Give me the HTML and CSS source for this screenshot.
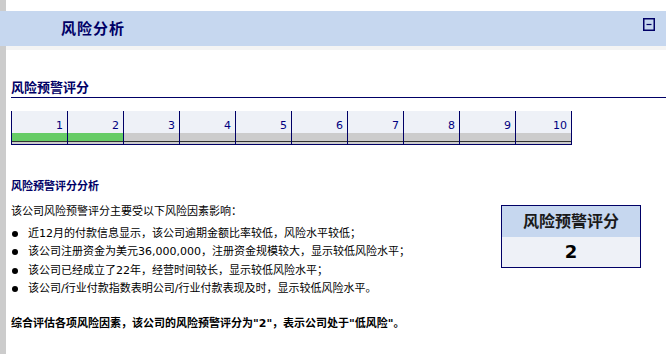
FILE: index.html
```html
<!DOCTYPE html>
<html lang="zh">
<head>
    <meta charset="UTF-8">
    <meta name="viewport" content="width=device-width, initial-scale=1.0">
    <title>风险分析</title>
    <link rel="stylesheet" href="styles.css">
</head>
<body>
<div class="page">
    <div class="header">
        <h1>风险分析</h1>
        <svg class="toggle" width="12" height="13" viewBox="0 0 12 13">
            <rect x="0.75" y="0.75" width="10.5" height="11.5" fill="none" stroke="#000066" stroke-width="1.5"/>
            <line x1="3.5" y1="6.5" x2="8.5" y2="6.5" stroke="#000066" stroke-width="1.2"/>
        </svg>
    </div>
    <div class="strip"></div>

    <div class="content">
        <h2 class="section-title">风险预警评分</h2>

        <div class="scale">
            <div class="cell on"><span class="num">1</span><div class="fill"></div><div class="base"></div></div>
            <div class="cell on"><span class="num">2</span><div class="fill"></div><div class="base"></div></div>
            <div class="cell"><span class="num">3</span><div class="fill"></div><div class="base"></div></div>
            <div class="cell"><span class="num">4</span><div class="fill"></div><div class="base"></div></div>
            <div class="cell"><span class="num">5</span><div class="fill"></div><div class="base"></div></div>
            <div class="cell"><span class="num">6</span><div class="fill"></div><div class="base"></div></div>
            <div class="cell"><span class="num">7</span><div class="fill"></div><div class="base"></div></div>
            <div class="cell"><span class="num">8</span><div class="fill"></div><div class="base"></div></div>
            <div class="cell"><span class="num">9</span><div class="fill"></div><div class="base"></div></div>
            <div class="cell"><span class="num">10</span><div class="fill"></div><div class="base"></div></div>
        </div>

        <h3 class="sub-title">风险预警评分分析</h3>

        <div class="analysis">
            <div class="factors">
                <p>该公司风险预警评分主要受以下风险因素影响：</p>
                <ul>
                    <li>近12月的付款信息显示，该公司逾期金额比率较低，风险水平较低；</li>
                    <li>该公司注册资金为美元36,000,000，注册资金规模较大，显示较低风险水平；</li>
                    <li>该公司已经成立了22年，经营时间较长，显示较低风险水平；</li>
                    <li>该公司/行业付款指数表明公司/行业付款表现及时，显示较低风险水平。</li>
                </ul>
            </div>
            <div class="score-box">
                <div class="score-head">风险预警评分</div>
                <div class="score-value">2</div>
            </div>
        </div>

        <p class="summary">综合评估各项风险因素，该公司的风险预警评分为"2"，表示公司处于"低风险"。</p>
    </div>
</div>
</body>
</html>
```

FILE: styles.css
```css
html, body {
    margin: 0;
    padding: 0;
    background: #fff;
    font-family: Verdana, "DejaVu Sans", "Noto Sans CJK TC", sans-serif;
    font-size: 11px;
    color: #000;
}
.page {
    border-left: 6px solid #cccccc;
    margin-right: 1px;
    min-height: 354px;
    padding-top: 11px;
    box-sizing: border-box;
}
.header {
    margin-left: -6px;
    height: 35px;
    background: #c6d7ef;
    display: flex;
    align-items: center;
    justify-content: space-between;
}
.header h1 {
    margin: 0 0 0 61px;
    font-size: 15px;
    letter-spacing: 1px;
    font-weight: bold;
    color: #000066;
    line-height: 18px;
}
.toggle {
    align-self: flex-start;
    margin: 7px 11px 0 0;
}
.strip {
    height: 4px;
    background: #f4f4f4;
}

.content {
    padding-left: 5px;
}
.section-title {
    margin: 30px 0 0;
    padding-bottom: 1px;
    font-size: 13px;
    line-height: 16px;
    color: #000066;
    border-bottom: 1px solid #000066;
}

.scale {
    display: flex;
    width: 560px;
    margin-top: 13px;
    border-left: 1px solid #000066;
}
.cell {
    width: 55px;
    border-right: 1px solid #000066;
    border-bottom: 1px solid #000066;
    background: #eef1f7;
}
.num {
    display: block;
    height: 14px;
    padding: 8px 4px 0 0;
    text-align: right;
    line-height: 13px;
    color: #000080;
}
.fill {
    height: 8px;
    background: #cccccc;
    border-bottom: 1px solid #333;
}
.cell.on .fill {
    background: #66cc66;
}
.base {
    height: 2px;
    background: #cccccc;
}

.sub-title {
    margin: 35px 0 0;
    font-size: 11px;
    line-height: 14px;
    color: #000066;
}
.analysis {
    display: flex;
    justify-content: space-between;
    align-items: flex-start;
    margin-top: 9px;
}
.factors p {
    margin: 0;
    line-height: 18px;
}
.factors ul {
    list-style: none;
    margin: 4px 0 0;
    padding: 0;
}
.factors li {
    display: flex;
    align-items: center;
    line-height: 18.3px;
}
.factors li::before {
    content: "";
    flex: none;
    width: 6px;
    height: 6px;
    border-radius: 50%;
    background: #000;
    margin: 0 10px 0 1px;
}

.score-box {
    width: 138px;
    margin: 2px 25px 0 0;
    border: 1px solid #000066;
    text-align: center;
}
.score-head {
    height: 31px;
    line-height: 31px;
    background: #c6d7ef;
    font-size: 16px;
    font-weight: bold;
    color: #1a1a1a;
}
.score-value {
    height: 30px;
    line-height: 30px;
    background: #eef1f7;
    font-size: 18px;
    font-weight: bold;
}

.summary {
    margin: 17px 0 0;
    line-height: 18px;
    font-weight: bold;
}
```
